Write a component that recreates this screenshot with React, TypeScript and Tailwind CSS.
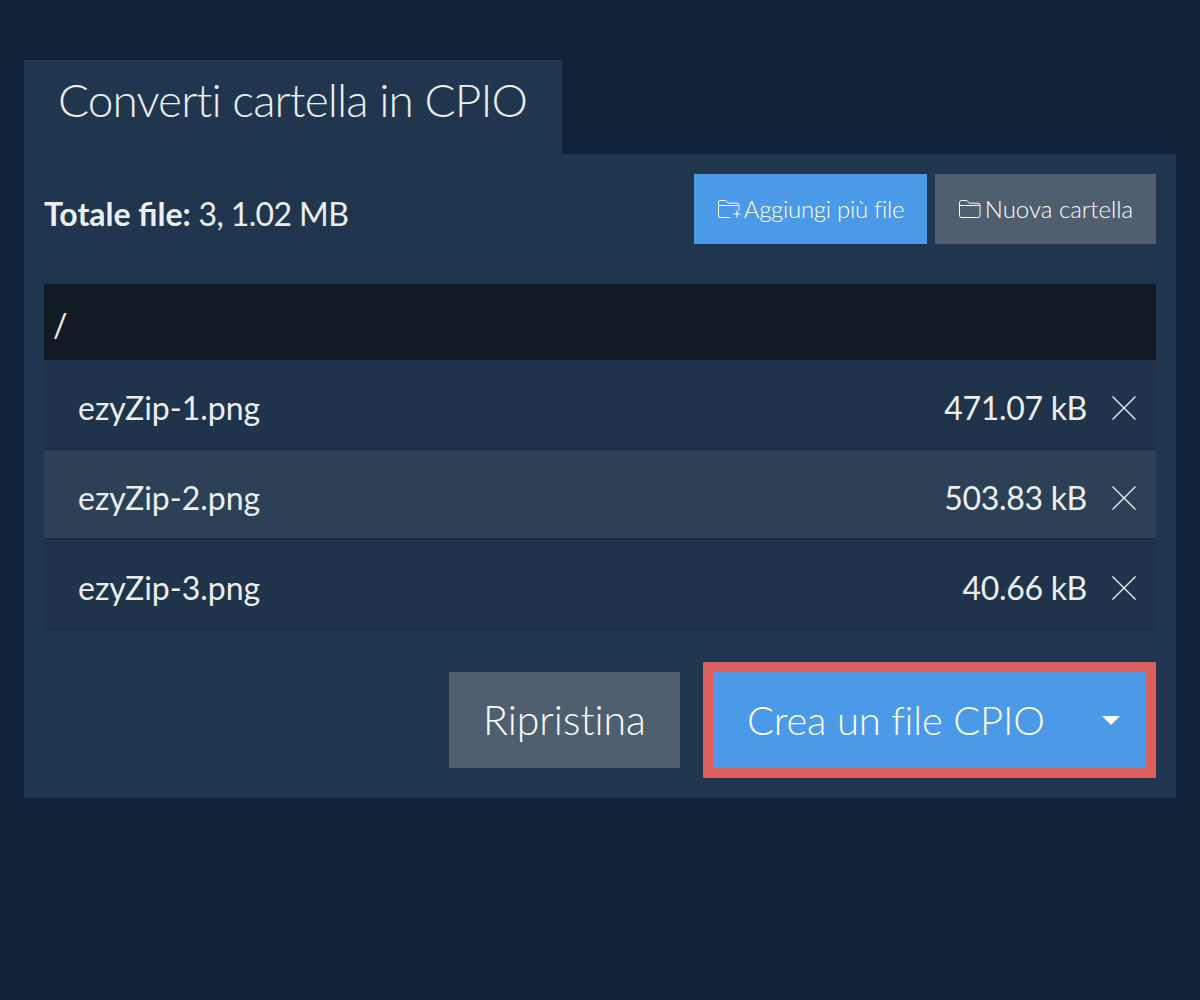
const LATO = "font-['Lato',sans-serif]";

const FILES = [
  { name: "ezyZip-1.png", size: "471.07 kB", bg: "bg-[#1f344a]" },
  { name: "ezyZip-2.png", size: "503.83 kB", bg: "bg-[#2c4056]" },
  { name: "ezyZip-3.png", size: "40.66 kB", bg: "bg-[#1f344a]" },
];

function FolderIcon({ plus }: { plus?: boolean }) {
  return (
    <svg width="24" height="20" viewBox="0 0 24 20" fill="none" stroke="currentColor" strokeWidth="1" className="shrink-0">
      {plus ? (
        <>
          <path d="M13 18.5H3.5a2 2 0 0 1-2-2V3.5a2 2 0 0 1 2-2h4.6a2 2 0 0 1 1.5.7l1.2 1.6a1 1 0 0 0 .8.4h8.4a2 2 0 0 1 2 2v5.3" />
          <path d="M1.5 6.5h20" />
          <path d="M20 11.5v7M16.5 15h7" strokeWidth="1.2" />
        </>
      ) : (
        <>
          <path d="M3.5 18.5a2 2 0 0 1-2-2V3.5a2 2 0 0 1 2-2h4.6a2 2 0 0 1 1.5.7l1.2 1.6a1 1 0 0 0 .8.4h8.4a2 2 0 0 1 2 2v10.3a2 2 0 0 1-2 2z" />
          <path d="M1.5 6.5h20" />
        </>
      )}
    </svg>
  );
}

function CloseIcon() {
  return (
    <svg width="26" height="26" viewBox="0 0 26 26" fill="none" stroke="#e9ecef" strokeWidth="1.4" className="mt-2 shrink-0">
      <path d="M1.5 1.5l23 23M24.5 1.5l-23 23" />
    </svg>
  );
}

export default function App() {
  return (
    <div className={`${LATO} min-h-[1000px] bg-[#0f2439] px-6 pt-[60px] text-[#eceff1]`}>
      <div className="flex h-[94px] w-[538px] items-start bg-[#20364e] pl-[34px] pt-[9px]">
        <h1 className="text-[46px] leading-[62px] font-light tracking-[-0.9px] [font-variant-ligatures:none]">
          Converti cartella in CPIO
        </h1>
      </div>

      <div className="h-[644px] bg-[#20364e] px-5 pt-5">
        <div className="flex h-[70px] items-center justify-between">
          <div className="pt-[10px] text-[32px] leading-[40px] tracking-[-0.6px]">
            <b className="font-bold tracking-normal">Totale file:</b> 3, 1.02 MB
          </div>
          <div className="flex gap-2">
            <button className="flex h-[70px] w-[233px] items-center justify-center gap-[3px] bg-[#4b9ae8] text-[24px] font-light tracking-[-0.3px] text-white">
              <FolderIcon plus />
              Aggiungi più file
            </button>
            <button className="flex h-[70px] w-[221px] items-center justify-center gap-[3px] bg-[#4f5f6f] text-[24px] font-light text-white">
              <FolderIcon />
              Nuova cartella
            </button>
          </div>
        </div>

        <div className="mt-10 flex h-[76px] items-center bg-[#121a24] pt-[5px] pl-[9px] text-[32px]">/</div>

        {FILES.map((file) => (
          <div
            key={file.name}
            className={`flex h-[90px] items-center border-b-2 border-[#1b2e43] pr-[19px] pl-[35px] text-[32px] ${file.bg}`}
          >
            <span className="flex-1 pt-2 -ml-px">{file.name}</span>
            <span className="mr-6 pt-2 tracking-[-0.3px]">{file.size}</span>
            <CloseIcon />
          </div>
        ))}

        <div className="mt-[32px] flex items-center justify-end gap-[23px]">
          <button className="h-[96px] w-[231px] bg-[#4f5f6f] text-[41px] font-light text-white [font-variant-ligatures:none]">
            Ripristina
          </button>
          <div className="border-[10px] border-[#dc5f5f]">
            <button className="flex h-[96px] w-[433px] items-center bg-[#4b9ae8] pl-[34px] text-[40px] font-light tracking-[-0.2px] text-white">
              <span className="flex-1 text-left">Crea un file CPIO</span>
              <span className="mr-[26px] h-0 w-0 border-x-[9px] border-t-[9px] border-x-transparent border-t-white" />
            </button>
          </div>
        </div>
      </div>
    </div>
  );
}
